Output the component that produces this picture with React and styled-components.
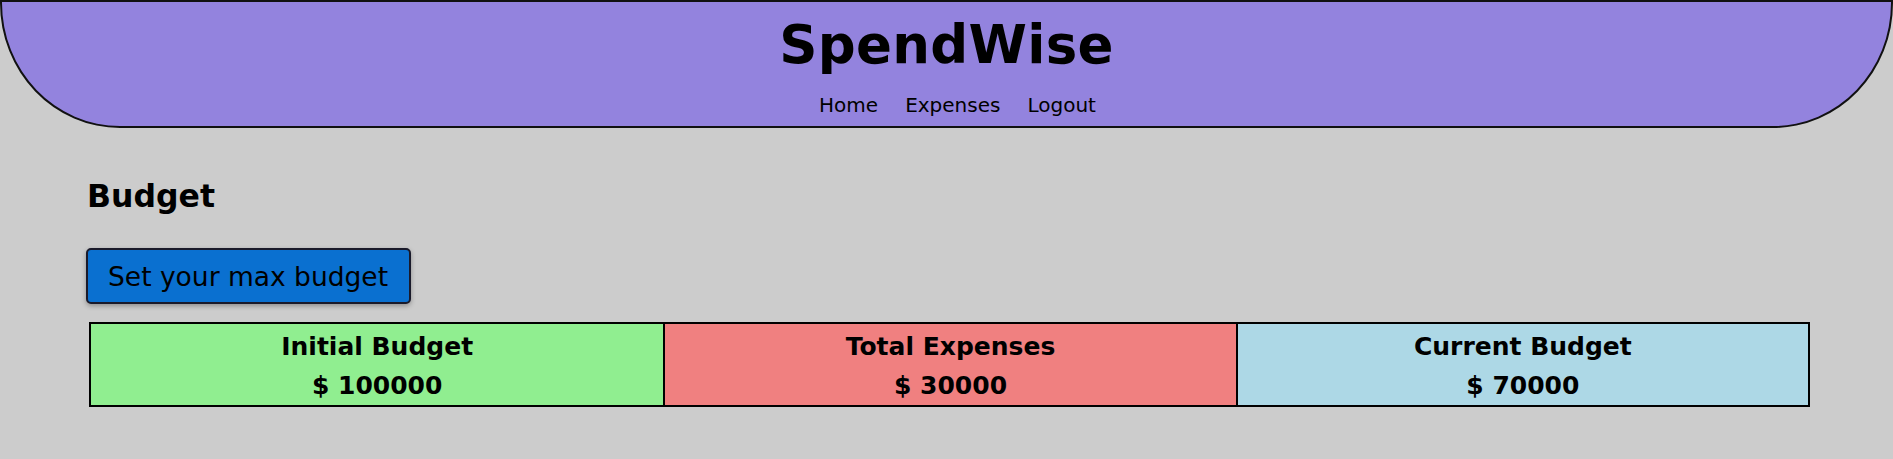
import React from 'react'
import styled, { createGlobalStyle } from 'styled-components'

const GlobalStyle = createGlobalStyle`
  body {
    margin: 0;
    background: #cccccc;
    font-family: "DejaVu Sans", sans-serif;
    color: #000;
  }
`

const budget = [
  { label: 'Initial Budget', value: 100000, color: '#90ee90' },
  { label: 'Total Expenses', value: 30000, color: '#f08080' },
  { label: 'Current Budget', value: 70000, color: '#add8e6' },
]

function App() {
  return (
    <Page>
      <GlobalStyle />
      <Header>
        <Logo>SpendWise</Logo>
        <Nav>
          <NavLink href="#">Home</NavLink>
          <NavLink href="#">Expenses</NavLink>
          <NavLink href="#">Logout</NavLink>
        </Nav>
      </Header>
      <Main>
        <Title>Budget</Title>
        <SetButton>Set your max budget</SetButton>
        <Summary>
          {budget.map((b) => (
            <Cell key={b.label} $bg={b.color}>
              <CellLabel>{b.label}</CellLabel>
              <CellValue>$ {b.value}</CellValue>
            </Cell>
          ))}
        </Summary>
      </Main>
    </Page>
  )
}

export default App

const Page = styled.div`
  min-height: 459px;
`

const Header = styled.header`
  background: #9383de;
  border: 2px solid #111;
  border-radius: 0 0 120px 120px / 0 0 125px 125px;
  padding: 12px 0 9px;
  display: flex;
  flex-direction: column;
  align-items: center;
`

const Logo = styled.h1`
  margin: 0;
  font-size: 53px;
  line-height: 62px;
  font-weight: bold;
  letter-spacing: 0.3px;
`

const Nav = styled.nav`
  display: flex;
  gap: 27px;
  margin-top: 17px;
  padding-left: 22px;
  line-height: 24px;
`

const NavLink = styled.a`
  font-size: 20px;
  color: #000;
  text-decoration: none;
`

const Main = styled.main`
  padding: 50px 83px 0 86px;
  display: flex;
  flex-direction: column;
  align-items: flex-start;
`

const Title = styled.h2`
  margin: 0 0 33px 1px;
  font-size: 31.5px;
  line-height: 37px;
  font-weight: bold;
`

const SetButton = styled.button`
  font-family: inherit;
  font-size: 26.5px;
  line-height: 30px;
  padding: 12px 21px 10px 20px;
  background: #0a70d0;
  color: #000;
  border: 2px solid #1a1a2a;
  border-radius: 5px;
  box-shadow: 0 2px 5px rgba(0, 0, 0, 0.3);
  cursor: pointer;
`

const Summary = styled.div`
  margin: 18px 0 0 3px;
  align-self: stretch;
  display: grid;
  grid-template-columns: repeat(3, 1fr);
  border: 2.5px solid #000;
`

const Cell = styled.div`
  background: ${(p) => p.$bg};
  text-align: center;
  padding: 3px 0 0;
  line-height: 39px;
  font-size: 25px;
  font-weight: bold;
  & + & {
    border-left: 2.5px solid #000;
  }
`

const CellLabel = styled.div``

const CellValue = styled.div``
